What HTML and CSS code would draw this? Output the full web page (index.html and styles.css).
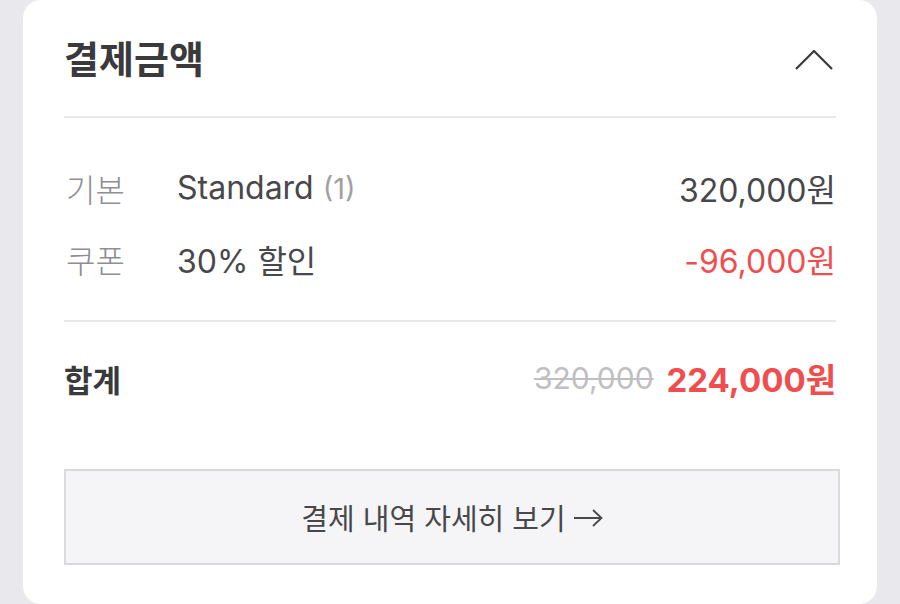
FILE: index.html
```html
<!DOCTYPE html>
<html lang="ko">
<head>
<meta charset="utf-8">
<title>결제금액</title>
<link rel="stylesheet" href="styles.css">
</head>
<body>
<div class="card">
  <div class="header">
    <h2 class="title">결제금액</h2>
    <svg class="chevron" width="38" height="20" viewBox="0 0 38 20"><polyline points="1,19 19,1 37,19" fill="none" stroke="#3a3a3c" stroke-width="2.2" stroke-linejoin="miter"/></svg>
  </div>
  <div class="items">
    <div class="row">
      <span class="label">기본</span>
      <span class="name">Standard <span class="qty">(1)</span></span>
      <span class="amount">320,000원</span>
    </div>
    <div class="row">
      <span class="label">쿠폰</span>
      <span class="name">30% 할인</span>
      <span class="amount red">-96,000원</span>
    </div>
  </div>
  <div class="total">
    <span class="total-label">합계</span>
    <span class="total-values"><s class="old">320,000</s><span class="final">224,000원</span></span>
  </div>
  <button class="detail-btn">결제 내역 자세히 보기<svg class="arrow" width="30" height="18" viewBox="0 0 30 18"><path d="M1 9 H28 M20 1 L28.5 9 L20 17" fill="none" stroke="#48484a" stroke-width="1.8"/></svg></button>
</div>
</body>
</html>
```
FILE: styles.css
```css
* { box-sizing: border-box; }
html, body {
  margin: 0;
  padding: 0;
  background: #e8e8ed;
  height: 604px;
  overflow: hidden;
}
body {
  font-family: Inter, "Noto Sans CJK KR", sans-serif;
  color: #48484a;
}
.card {
  margin-left: 23px;
  width: 854px;
  height: 604px;
  background: #ffffff;
  border-radius: 18px;
  padding: 0 41px;
}
.header {
  height: 116px;
  display: flex;
  align-items: center;
  justify-content: space-between;
  border-bottom: 2px solid #e8e8ea;
  box-sizing: content-box;
}
.title {
  margin: 0;
  font-family: "Noto Sans CJK KR", sans-serif;
  font-weight: 700;
  font-size: 38px;
  color: #3a3a3c;
  position: relative;
  top: -2px;
}
.chevron {
  margin-right: 3px;
  margin-top: 4px;
}
.items {
  padding: 34px 0 26px;
  border-bottom: 2px solid #e8e8ea;
}
.row {
  height: 71px;
  display: flex;
  align-items: center;
  font-size: 32px;
}
.label {
  width: 113px;
  padding-left: 2px;
  color: #8e8e93;
  font-family: "Noto Sans CJK KR", sans-serif;
  font-weight: 300;
}
.name {
  flex: 1;
  color: #48484a;
}
.qty {
  color: #a0a0a5;
  font-size: 29px;
}
.amount {
  color: #48484a;
}
.red { color: #f04e4e; }
.total {
  height: 112px;
  display: flex;
  align-items: center;
  justify-content: space-between;
}
.total-label {
  font-family: "Noto Sans CJK KR", sans-serif;
  font-weight: 700;
  font-size: 31px;
  color: #3a3a3c;
}
.total-values {
  display: flex;
  align-items: center;
  gap: 13px;
  font-size: 33px;
}
.old {
  color: #bfbfc2;
  font-size: 30px;
  text-decoration-thickness: 2px;
}
.final {
  color: #f04e4e;
  font-weight: 700;
}
.detail-btn {
  margin-top: 35px;
  width: 776px;
  height: 96px;
  display: flex;
  align-items: center;
  justify-content: center;
  gap: 7px;
  background: #f5f5f7;
  border: 2px solid #d9d9dc;
  font-family: "Noto Sans CJK KR", sans-serif;
  font-size: 29px;
  color: #48484a;
  padding: 0;
}
.arrow {
  margin-top: 2px;
}
```
